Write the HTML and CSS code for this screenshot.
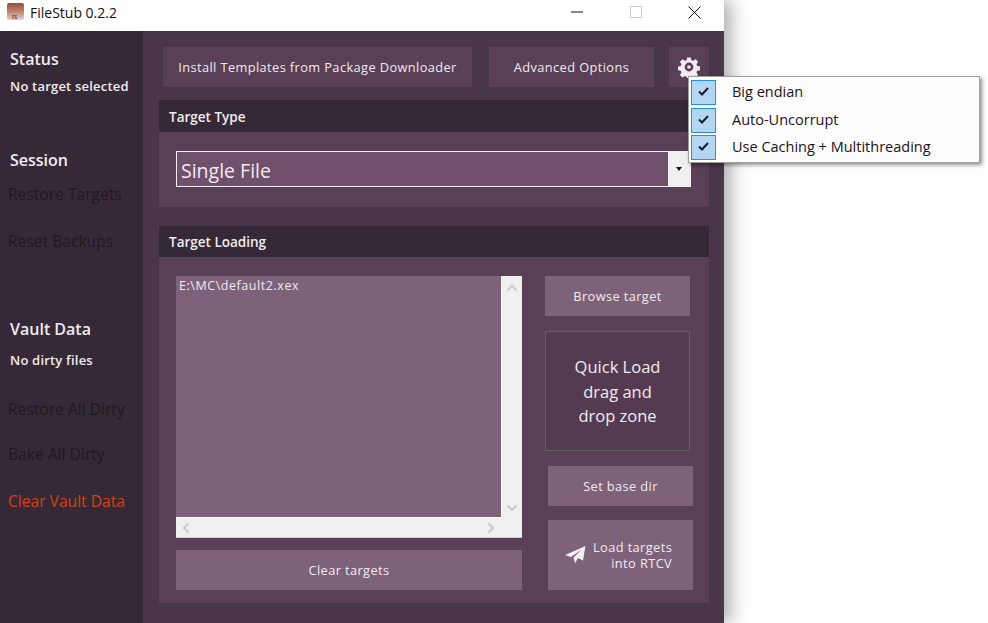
FILE: index.html
```html
<!DOCTYPE html>
<html lang="en">
<head>
  <meta charset="UTF-8">
  <title>FileStub 0.2.2</title>
  <link rel="stylesheet" href="styles.css">
</head>
<body>
  <div class="window">
    <div class="titlebar">
      <svg class="app-icon" width="17" height="17" viewBox="0 0 17 17">
        <defs>
          <linearGradient id="iconFade" x1="0" y1="0" x2="0" y2="1">
            <stop offset="0" stop-color="#9c4a34"/>
            <stop offset="0.55" stop-color="#c08a78"/>
            <stop offset="1" stop-color="#e0d4d0"/>
          </linearGradient>
        </defs>
        <rect x="0" y="0" width="17" height="17" rx="2" fill="url(#iconFade)"/>
        <text class="icon-label" x="5" y="15.500">FS</text>
      </svg>
      <span class="app-name">FileStub 0.2.2</span>
      <div class="win-controls">
        <span class="win-btn"><svg width="12" height="12" viewBox="0 0 12 12"><path d="M0 6h12" stroke="#111" fill="none"/></svg></span>
        <span class="win-btn"><svg width="12" height="12" viewBox="0 0 12 12"><rect x=".5" y=".5" width="11" height="11" stroke="#ccc" fill="none"/></svg></span>
        <span class="win-btn"><svg width="13" height="13" viewBox="0 0 13 13"><path d="M.5.5l12 12M12.500.5l-12 12" stroke="#111" fill="none"/></svg></span>
      </div>
    </div>

    <div class="content">
      <aside class="sidebar">
        <h2 class="side-title status-title">Status</h2>
        <p class="side-note">No target selected</p>
        <h2 class="side-title session-title">Session</h2>
        <a class="side-link restore-link">Restore Targets</a>
        <a class="side-link reset-link">Reset Backups</a>
        <h2 class="side-title vault-title">Vault Data</h2>
        <p class="side-note dirty-note">No dirty files</p>
        <a class="side-link dirty-link">Restore All Dirty</a>
        <a class="side-link bake-link">Bake All Dirty</a>
        <a class="side-link danger clear-link">Clear Vault Data</a>
      </aside>

      <main class="main">
        <div class="toolbar">
          <button class="top-btn install-btn">Install Templates from Package Downloader</button>
          <button class="top-btn advanced-btn">Advanced Options</button>
          <button class="top-btn gear-btn">
            <svg width="22" height="22" viewBox="0 0 24 24">
              <path fill="#f1ecf1" fill-rule="evenodd" d="M10 1.500h4l.6 3 1.900.8 2.600-1.700 2.800 2.800-1.700 2.600.8 1.900 3 .6v4l-3 .6-.8 1.900 1.700 2.600-2.800 2.800-2.600-1.700-1.900.8-.6 3h-4l-.6-3-1.900-.8-2.600 1.700-2.800-2.800 1.700-2.600-.8-1.900-3-.6v-4l3-.6.8-1.900-1.700-2.600 2.800-2.800 2.600 1.700 1.900-.8zM12 7.200a4.800 4.800 0 1 0 0 9.600a4.800 4.800 0 0 0 0-9.600zM12 10a2 2 0 1 1 0 4a2 2 0 0 1 0-4z"/>
            </svg>
          </button>
        </div>

        <section class="panel type-panel">
          <h3 class="panel-header">Target Type</h3>
          <div class="panel-body type-body">
            <div class="select">
              <span class="select-value">Single File</span>
              <span class="select-arrow"><i></i></span>
            </div>
          </div>
        </section>

        <section class="panel loading-panel">
          <h3 class="panel-header">Target Loading</h3>
          <div class="panel-body loading-body">
            <div class="list-col">
              <div class="listbox">
                <div class="list-area">E:\MC\default2.xex</div>
                <div class="scroll-v">
                  <svg width="12" height="8" viewBox="0 0 12 8"><path d="M1.500 6.500L6 2l4.500 4.500" stroke="#c9c9c9" stroke-width="2" fill="none"/></svg>
                  <svg width="12" height="8" viewBox="0 0 12 8"><path d="M1.500 1.500L6 6l4.500-4.500" stroke="#c9c9c9" stroke-width="2" fill="none"/></svg>
                </div>
                <div class="scroll-h">
                  <svg width="8" height="12" viewBox="0 0 8 12"><path d="M6.500 1.500L2 6l4.500 4.500" stroke="#c9c9c9" stroke-width="2" fill="none"/></svg>
                  <svg width="8" height="12" viewBox="0 0 8 12"><path d="M1.500 1.500L6 6l-4.500 4.500" stroke="#c9c9c9" stroke-width="2" fill="none"/></svg>
                </div>
              </div>
              <button class="btn clear-btn">Clear targets</button>
            </div>
            <div class="action-col">
              <button class="btn browse-btn">Browse target</button>
              <div class="dropzone">Quick Load<br>drag and<br>drop zone</div>
              <button class="btn base-btn">Set base dir</button>
              <button class="btn load-btn">
                <svg width="21" height="18" viewBox="0 0 21 18"><path d="M0 9L20.500 0 18 14.500 13 12 10 17.500 8.500 11.500 16 4 6 11z" fill="#f3eff3"/></svg>
                <span>Load targets<br>into RTCV</span>
              </button>
            </div>
          </div>
        </section>
      </main>
    </div>
  </div>

  <div class="settings-menu">
    <div class="menu-item"><span class="check"><svg width="11" height="9" viewBox="0 0 11 9"><path d="M1 4.500L4 7.500 10 1" stroke="#1a1a2a" stroke-width="2" fill="none"/></svg></span><span>Big endian</span></div>
    <div class="menu-item"><span class="check"><svg width="11" height="9" viewBox="0 0 11 9"><path d="M1 4.500L4 7.500 10 1" stroke="#1a1a2a" stroke-width="2" fill="none"/></svg></span><span>Auto-Uncorrupt</span></div>
    <div class="menu-item"><span class="check"><svg width="11" height="9" viewBox="0 0 11 9"><path d="M1 4.500L4 7.500 10 1" stroke="#1a1a2a" stroke-width="2" fill="none"/></svg></span><span>Use Caching + Multithreading</span></div>
  </div>
</body>
</html>
```

FILE: styles.css
```css
:root {
  --side-bg: #362937;
  --main-bg: #4a3649;
  --panel-bg: #5a4056;
  --btn-bg: #7d6279;
  --text: #f0ebf0;
}

* {
  box-sizing: border-box;
}

html, body {
  height: 100%;
}

body {
  margin: 0;
  background: #fff;
  overflow: hidden;
  font-family: "Open Sans", "Noto Sans", sans-serif;
  color: var(--text);
}

.window {
  width: 724px;
  height: 623px;
  display: flex;
  flex-direction: column;
  box-shadow: 6px 0 18px rgba(0, 0, 0, 0.35);
}

.titlebar {
  height: 31px;
  flex: none;
  display: flex;
  align-items: center;
  padding-left: 7px;
  background: #fff;
  color: #111;
  font-size: 14px;
}

.app-icon {
  margin: -8px 6px 0 0;
}

.icon-label {
  font-size: 4.500px;
  font-weight: 700;
  fill: #6b3a2c;
}

.app-name {
  padding-bottom: 6px;
}

.win-controls {
  margin-left: auto;
  display: flex;
  padding-bottom: 7px;
}

.win-btn {
  width: 59px;
  height: 24px;
  display: flex;
  align-items: center;
  justify-content: center;
}

.content {
  flex: 1;
  display: flex;
  min-height: 0;
}

.sidebar {
  width: 143px;
  flex: none;
  display: flex;
  flex-direction: column;
  align-items: flex-start;
  padding: 18px 0 0 8px;
  background: var(--side-bg);
}

.side-title {
  margin: 0 0 0 2px;
  font-size: 16px;
  line-height: 21px;
  font-weight: 600;
}

.side-note {
  margin: 7px 0 0 2px;
  font-size: 13px;
  line-height: 18px;
  font-weight: 600;
  letter-spacing: 0.200px;
}

.side-link {
  font-size: 15.600px;
  line-height: 20px;
  color: #1f181f;
}

.side-link.danger {
  color: #d8400f;
}

.session-title { margin-top: 55px; }
.restore-link { margin-top: 13px; }
.reset-link { margin-top: 27px; }
.vault-title { margin-top: 68px; }
.dirty-note { margin-top: 11px; }
.dirty-link { margin-top: 30px; }
.bake-link { margin-top: 25px; }
.clear-link { margin-top: 27px; }

.main {
  flex: 1;
  padding: 16px 15px 0 16px;
  background: var(--main-bg);
}

button {
  border: 0;
  padding: 0;
  font-family: inherit;
  color: var(--text);
  font-weight: 500;
}

.toolbar {
  display: flex;
  height: 40px;
  padding-left: 4px;
}

.top-btn {
  height: 40px;
  background: var(--panel-bg);
  font-size: 12.800px;
  letter-spacing: 0.400px;
}

.install-btn { width: 309px; }
.advanced-btn { width: 165px; margin-left: 17px; }
.gear-btn {
  width: 40px;
  margin-left: 15px;
  display: flex;
  align-items: center;
  justify-content: center;
}

.panel {
  background: var(--panel-bg);
}

.panel-header {
  margin: 0;
  padding-left: 10px;
  background: var(--side-bg);
  font-size: 13.500px;
  font-weight: 600;
}

.type-panel {
  margin-top: 13px;
  height: 107px;
}

.type-panel .panel-header {
  height: 32px;
  line-height: 35px;
}

.type-body {
  padding: 19px 18px 0 17px;
}

.select {
  height: 36px;
  display: flex;
  border: 1px solid #f2eef2;
  background: #71506c;
}

.select-value {
  flex: 1;
  padding-left: 4px;
  font-size: 19.500px;
  line-height: 37px;
  font-weight: 400;
}

.select-arrow {
  width: 22px;
  display: flex;
  align-items: center;
  justify-content: center;
  background: #f0f0f0;
}

.select-arrow i {
  width: 0;
  height: 0;
  border: 3.500px solid transparent;
  border-top: 4px solid #111;
  border-bottom: 0;
}

.loading-panel {
  margin-top: 19px;
  height: 377px;
}

.loading-panel .panel-header {
  height: 31px;
  line-height: 33px;
}

.loading-body {
  display: flex;
  padding: 19px 0 0 17px;
}

.list-col {
  width: 346px;
  flex: none;
}

.listbox {
  height: 262px;
  display: grid;
  grid-template-columns: 326px 20px;
  grid-template-rows: 242px 20px;
  background: #f0f0f0;
}

.list-area {
  padding: 1px 3px;
  background: var(--btn-bg);
  border-right: 1px solid #fff;
  border-bottom: 1px solid #fff;
  font-size: 12.500px;
  line-height: 17px;
  font-weight: 500;
  letter-spacing: 0.550px;
}

.scroll-v {
  display: flex;
  flex-direction: column;
  justify-content: space-between;
  align-items: center;
  padding: 8px 0 6px;
}

.scroll-h {
  grid-column: 1 / 3;
  display: flex;
  justify-content: space-between;
  align-items: center;
  padding: 0 27px 0 6px;
  border-bottom: 1px solid #ccc;
}

.btn {
  display: block;
  background: var(--btn-bg);
  font-size: 12.800px;
  letter-spacing: 0.400px;
}

.clear-btn {
  width: 346px;
  height: 40px;
  margin-top: 12px;
}

.action-col {
  margin-left: 23px;
  width: 148px;
  flex: none;
}

.browse-btn {
  width: 145px;
  height: 40px;
}

.dropzone {
  width: 145px;
  height: 120px;
  margin-top: 15px;
  display: flex;
  flex-direction: column;
  align-items: center;
  justify-content: center;
  padding-top: 2px;
  border: 1px solid #655f60;
  background: #543b51;
  text-align: center;
  font-size: 16.500px;
  line-height: 24.500px;
}

.base-btn {
  width: 145px;
  height: 40px;
  margin: 15px 0 0 3px;
}

.load-btn {
  width: 145px;
  height: 70px;
  margin: 14px 0 0 3px;
  display: flex;
  align-items: center;
  justify-content: flex-start;
  gap: 7px;
  padding: 0 0 0 17px;
  text-align: right;
  line-height: 16px;
}

.settings-menu {
  position: absolute;
  left: 688px;
  top: 76px;
  width: 292px;
  height: 87px;
  padding: 3px 2px 0;
  background: #fdfdfd;
  border: 1px solid #a0a0a0;
  box-shadow: 2px 2px 4px rgba(0, 0, 0, 0.45);
  color: #1a1320;
  font-size: 14.500px;
}

.menu-item {
  display: flex;
  align-items: flex-start;
  height: 27.500px;
  line-height: 23px;
}

.check {
  width: 25px;
  height: 25px;
  margin-right: 16px;
  padding-bottom: 2px;
  display: flex;
  align-items: center;
  justify-content: center;
  background: #b3d7f3;
  border: 1px solid #2a8ee0;
}
```
